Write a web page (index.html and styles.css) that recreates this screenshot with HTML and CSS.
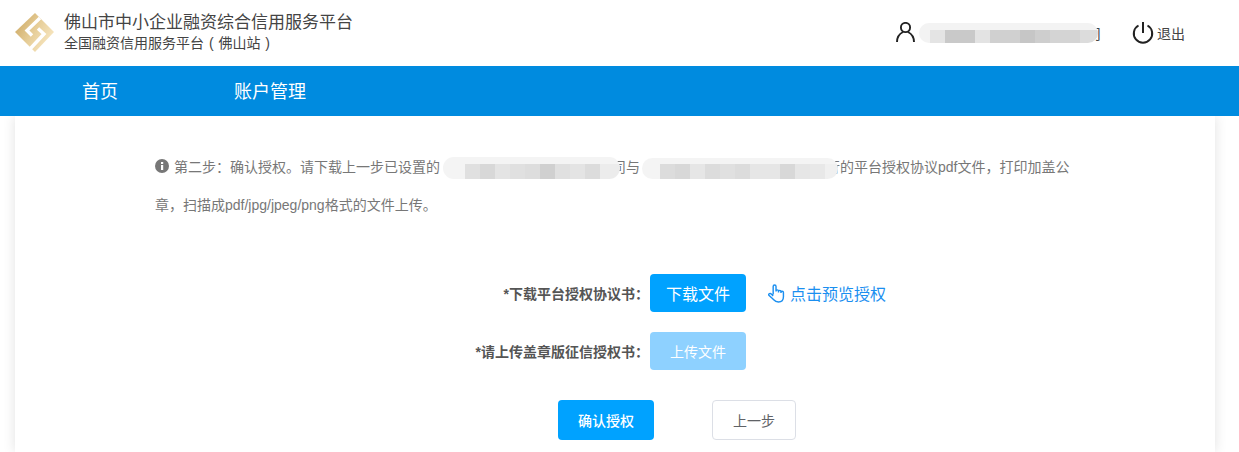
FILE: index.html
```html
<!DOCTYPE html>
<html lang="zh-CN">
<head>
<meta charset="utf-8">
<title>佛山市中小企业融资综合信用服务平台</title>
<link rel="stylesheet" href="styles.css">
</head>
<body>
<header class="top">
  <div class="brand">
    <svg class="logo" viewBox="0 0 40 40" width="40" height="40">
      <defs><linearGradient id="g" x1="0" y1="0" x2="1" y2="0.6"><stop offset="0" stop-color="#c8a25a"/><stop offset="0.55" stop-color="#e6cd97"/><stop offset="1" stop-color="#f7e6c0"/></linearGradient></defs>
      <path d="M20 0 L39 19 L20 39 L0 19 Z" fill="url(#g)"/>
      <path d="M25 5 L12 17.500 L17 22.500" fill="none" stroke="#fff" stroke-width="3.400"/>
      <path d="M15 36 L29 21 L23 15.500" fill="none" stroke="#fff" stroke-width="3.400"/>
    </svg>
    <div class="titles">
      <div class="title">佛山市中小企业融资综合信用服务平台</div>
      <div class="subtitle">全国融资信用服务平台 ( 佛山站 )</div>
    </div>
  </div>
  <div class="user">
    <svg class="icon-user" viewBox="0 0 20 20" width="20" height="20"><circle cx="9.500" cy="5.500" r="4.600" fill="none" stroke="#222" stroke-width="1.900"/><path d="M1 20 C1 14 4 11.500 7 10 M18 20 C18 14 15 11.500 12 10" fill="none" stroke="#222" stroke-width="1.900"/></svg>
    <span class="blur blur-user"></span><span class="user-tail">司</span>
    <svg class="icon-power" viewBox="0 0 22 22" width="22" height="22"><path d="M6.500 3.500 A9.200 9.200 0 1 0 15.500 3.500" fill="none" stroke="#222" stroke-width="2"/><path d="M11 0 V11" stroke="#222" stroke-width="2"/></svg>
    <span class="logout">退出</span>
  </div>
</header>
<nav class="nav"><a class="nav-home">首页</a><a>账户管理</a></nav>
<main class="card">
  <p class="hint"><svg class="icon-info" viewBox="0 0 14 14" width="14" height="14"><circle cx="7" cy="7" r="7" fill="#777"/><rect x="6" y="6" width="2.200" height="5" fill="#fff"/><rect x="6" y="3" width="2.200" height="2" fill="#fff"/></svg><span class="hint-lead">第二步：确认授权。请下载上一步已设置的</span><span class="blur blur-a"></span>司与<span class="blur blur-b"></span>行的平台授权协议pdf文件，打印加盖公章，扫描成pdf/jpg/jpeg/png格式的文件上传。</p>
  <div class="rows">
    <div class="row">
      <label>*下载平台授权协议书：</label>
      <button class="btn primary big">下载文件</button>
      <a class="preview"><svg viewBox="0 0 20 20" width="19" height="19"><path d="M6.500 11 V2.500 a1.500 1.500 0 0 1 3 0 V8 M9.500 7.500 a1.300 1.300 0 0 1 2.600 0 V9 M12.100 8 a1.300 1.300 0 0 1 2.600 0 V9.500 M14.700 9 a1.300 1.300 0 0 1 2.600 0 V13.500 C17.300 17 15 19 12 19 C9 19 8 17.500 6 15.500 L2 12 C1 10 3.500 9.500 4.500 10.500 L6.500 12.500" fill="none" stroke="#1b8ff0" stroke-width="1.500"/></svg>点击预览授权</a>
    </div>
    <div class="row">
      <label>*请上传盖章版征信授权书：</label>
      <button class="btn disabled">上传文件</button>
    </div>
  </div>
  <div class="actions">
    <button class="btn primary action">确认授权</button>
    <button class="btn plain">上一步</button>
  </div>
</main>
</body>
</html>
```
FILE: styles.css
```css
* { box-sizing: border-box; }
html, body { margin: 0; height: 452px; overflow: hidden; }
body { background: #fff; font-family: "Liberation Sans", "Noto Sans CJK SC", sans-serif; color: #444; }
.top { height: 66px; display: flex; justify-content: space-between; align-items: center; padding: 0 54px 0 15px; }
.brand { display: flex; align-items: center; gap: 9px; margin-top: -3px; }
.logo { display: block; margin-top: 3px; }
.title { font-size: 17px; line-height: 23px; color: #444; }
.subtitle { font-size: 14px; line-height: 18px; color: #444; word-spacing: 1px; }
.user { display: flex; align-items: center; margin-top: -1px; }
.icon-user { display: block; margin: -1px 3px 0 0; }
.icon-power { display: block; margin: 0 3px 0 0; }
.logout { font-size: 14px; color: #444; }
.user-tail { font-size: 14px; color: #444; margin: 0 31px 0 -11px; }
.blur { display: inline-block; border-radius: 11px; vertical-align: middle; position: relative; z-index: 1; }
.blur-user { width: 179px; height: 20px; background: linear-gradient(#f3f3f3 0 7px, transparent 7px), linear-gradient(90deg, #f3f3f3 0 11px, #e4e4e4 11px 26px, #c9c9c9 26px 56px, #e3e3e3 56px 71px, #d0d0d0 71px 101px, #c6c6c6 101px 116px, #cecece 116px 131px, #d4d4d4 131px 161px, #dcdcdc 161px 179px); }
.nav { height: 50px; background: #008bdf; display: flex; align-items: center; padding: 0 0 2px 82px; font-size: 18px; color: #fff; position: relative; z-index: 2; }
.nav-home { margin-right: 116px; }
.card { width: 1200px; margin-left: 15px; height: 336px; background: #fff; box-shadow: 0 0 12px rgba(0,0,0,.12); overflow: hidden; }
.hint { width: 925px; margin: 32px 0 0 140px; font-size: 14px; line-height: 38px; color: #777; }
.icon-info { vertical-align: -1px; }
.hint-lead { margin-left: 5px; }
.blur-a { width: 177px; height: 22px; margin: 0 -8px 0 3px; background: linear-gradient(#f4f4f4 0 7px, transparent 7px), linear-gradient(90deg, #f4f4f4 0 22px, #e0e0e0 22px 37px, #d8d8d8 37px 52px, #e4e4e4 52px 67px, #e0e0e0 67px 82px, #dddddd 82px 97px, #d0d0d0 97px 112px, #e0e0e0 112px 127px, #e4e4e4 127px 142px, #dcdcdc 142px 157px, #ececec 157px 177px); }
.blur-b { width: 196px; height: 21px; margin: 0 -12px 0 2px; background: linear-gradient(#f4f4f4 0 6px, transparent 6px), linear-gradient(90deg, #f4f4f4 0 18px, #dcdcdc 18px 33px, #d8d8d8 33px 48px, #e6e6e6 48px 63px, #dcdcdc 63px 78px, #e0e0e0 78px 93px, #dcdcdc 93px 108px, #e6e6e6 108px 138px, #d8d8d8 138px 153px, #e6e6e6 153px 168px, #e8e8e8 168px 183px, #f0f0f0 183px 196px); }
.rows { margin-top: 50px; display: flex; flex-direction: column; gap: 20px; }
.row { display: flex; align-items: center; height: 38px; }
.row label { width: 634px; text-align: right; font-size: 14px; font-weight: 700; color: #555; margin-right: 1px; }
.btn { border: 0; border-radius: 4px; font-family: inherit; width: 96px; height: 38px; font-size: 14px; padding: 0; }
.primary { background: #00a2ff; color: #fff; }
.big { font-size: 16px; }
.disabled { background: #8ed1ff; color: #fff; }
.preview { display: flex; align-items: center; gap: 4px; margin-left: 21px; font-size: 16px; color: #1b8ff0; }
.actions { display: flex; margin: 30px 0 0 543px; gap: 58px; }
.action { height: 40px; font-weight: 500; }
.plain { width: 84px; height: 40px; background: #fff; border: 1px solid #dcdfe6; color: #606266; }
```
